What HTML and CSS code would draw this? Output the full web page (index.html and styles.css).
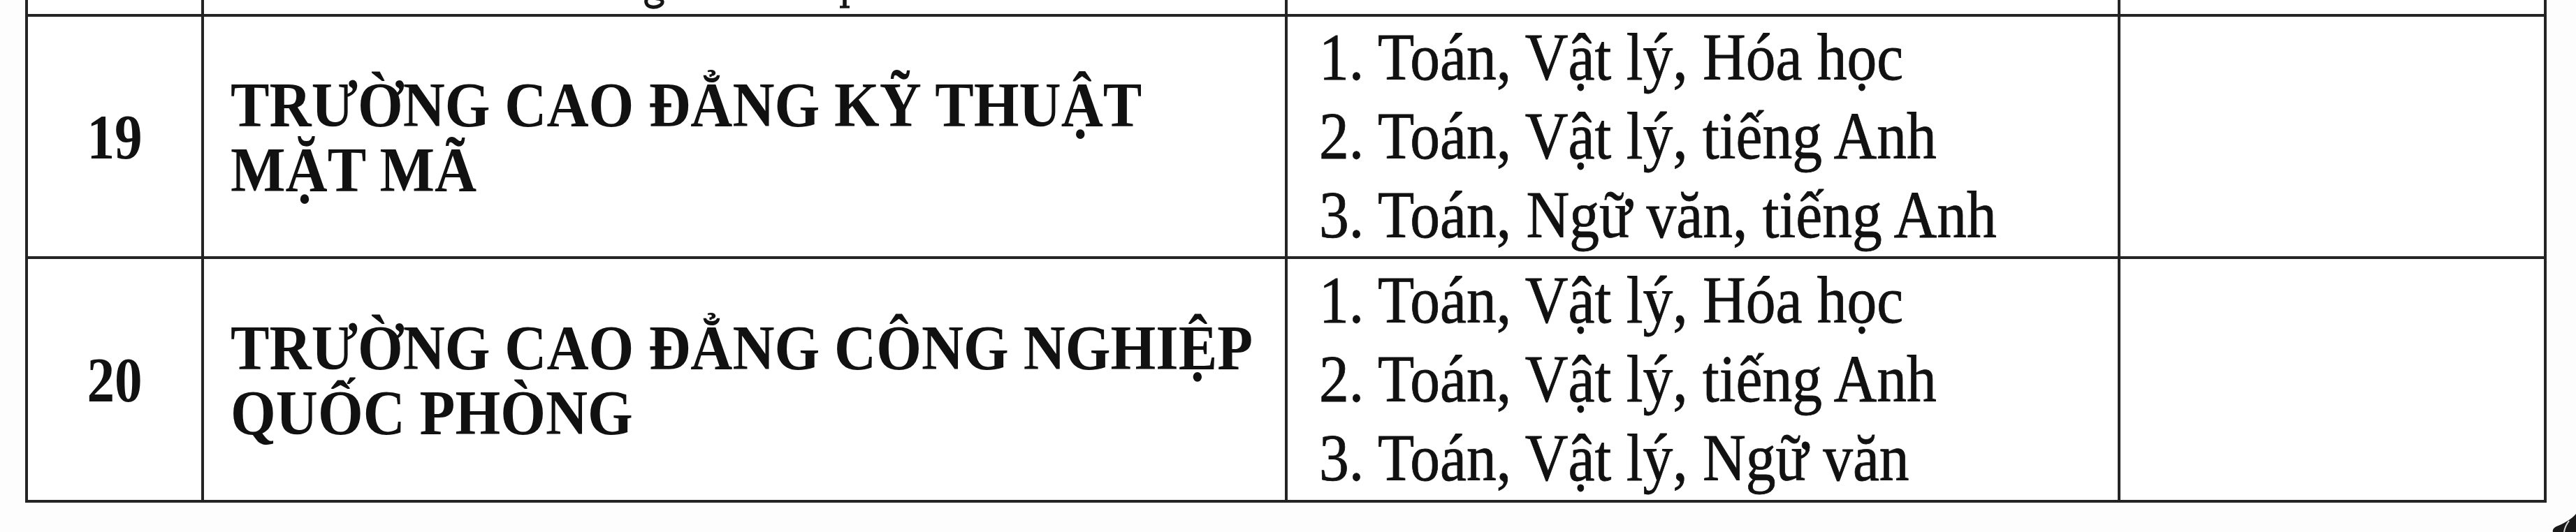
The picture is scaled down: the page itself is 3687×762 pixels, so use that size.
FILE: index.html
```html
<!DOCTYPE html>
<html lang="vi">
<head>
<meta charset="utf-8">
<title>Bảng tổ hợp môn xét tuyển</title>
<link rel="stylesheet" href="styles.css">
</head>
<body>
<div class="page">
  <div class="sheet">
    <div class="cell prev"></div>
    <div class="cell prev">
      <div class="tails">
        <svg class="mark-g" width="30" height="18" viewBox="0 0 30 18" aria-hidden="true">
          <path d="M5 0 C1 5 2 13 11 14 C19 15 27 11 26 6 C25 3 21 2 18 2" stroke="#151515" stroke-width="5" fill="none" stroke-linecap="round"/>
        </svg>
        <svg class="mark-p" width="18" height="18" viewBox="0 0 18 18" aria-hidden="true">
          <path d="M9 0 L9 13" stroke="#151515" stroke-width="5.5" fill="none"/>
          <path d="M2 14 L16 14" stroke="#151515" stroke-width="3.5" fill="none"/>
        </svg>
      </div>
    </div>
    <div class="cell prev"></div>
    <div class="cell prev"></div>

    <div class="cell row19 num"><span class="sx">19</span></div>
    <div class="cell row19 name"><div class="sx">TRƯỜNG CAO ĐẲNG KỸ THUẬT<br>MẶT MÃ</div></div>
    <div class="cell row19 subj"><div class="sx">1. Toán, Vật lý, Hóa học<br>2. Toán, Vật lý, tiếng Anh<br>3. Toán, Ngữ văn, tiếng Anh</div></div>
    <div class="cell row19"></div>

    <div class="cell row20 num"><span class="sx">20</span></div>
    <div class="cell row20 name"><div class="sx">TRƯỜNG CAO ĐẲNG CÔNG NGHIỆP<br>QUỐC PHÒNG</div></div>
    <div class="cell row20 subj"><div class="sx">1. Toán, Vật lý, Hóa học<br>2. Toán, Vật lý, tiếng Anh<br>3. Toán, Vật lý, Ngữ văn</div></div>
    <div class="cell row20"></div>
  </div>
  <svg class="curl" width="40" height="26" viewBox="0 0 40 26" aria-hidden="true">
    <path d="M40 0 C33 8 22 14 12 18 C8 20 6 23 7 26 L40 26 Z" fill="#1a1a1a"/>
    <path d="M30 10 C27 14 24 18 23 26" stroke="#ddd" stroke-width="2" fill="none"/>
  </svg>
</div>
</body>
</html>
```

FILE: styles.css
```css
html, body {
  margin: 0;
  padding: 0;
  background: #fdfdfd;
}

.page {
  position: relative;
  width: 3687px;
  height: 762px;
  overflow: hidden;
  font-family: "Liberation Serif", "Times New Roman", serif;
  color: #111;
}

.sheet {
  display: grid;
  grid-template-columns: 252px 1551px 1192px 610px;
  grid-template-rows: 120px 347px 349px;
  margin-left: 36px;
  margin-top: -96px;
  width: max-content;
  border-left: 4px solid #242424;
  filter: blur(0.6px);
}

.cell {
  box-sizing: border-box;
  border-right: 4px solid #242424;
  border-bottom: 4px solid #242424;
  display: flex;
  align-items: center;
  background: #fff;
}

.prev {
  align-items: flex-end;
}

.tails {
  display: flex;
  align-items: flex-end;
  margin-bottom: 6px;
}

.mark-g { margin-left: 630px; }
.mark-p { margin-left: 248px; }

.num {
  justify-content: center;
  font-weight: bold;
  font-size: 90px;
  line-height: 93px;
}

.num .sx {
  display: inline-block;
  transform: scaleX(0.88);
  transform-origin: center;
  padding-top: 2px;
}

.name {
  font-weight: bold;
  font-size: 90px;
  line-height: 93px;
  padding-left: 38px;
  white-space: nowrap;
}

.name .sx {
  transform: scaleX(0.925);
  transform-origin: left center;
  padding-top: 2px;
}

.subj {
  font-size: 95px;
  line-height: 113px;
  padding-left: 45px;
  white-space: nowrap;
  -webkit-text-stroke: 0.8px #111;
}

.subj .sx {
  transform: scaleX(0.9);
  transform-origin: left center;
}

.curl {
  position: absolute;
  right: 0;
  bottom: 0;
}
```
